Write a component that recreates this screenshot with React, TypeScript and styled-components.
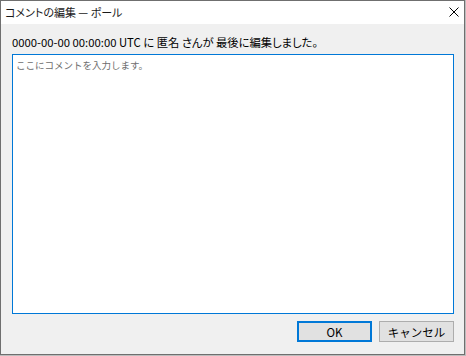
import React, { FC } from 'react';
import styled, { createGlobalStyle } from 'styled-components';

const GlobalStyle = createGlobalStyle`
  html, body {
    margin: 0;
    padding: 0;
    background: #bdbdbd;
  }
  * {
    box-sizing: border-box;
  }
`;

const App: FC = () => {
  return (
    <>
      <GlobalStyle />
      <Window>
        <TitleBar>
          <Title>コメントの編集 — ポール</Title>
          <CloseButton aria-label="閉じる">
            <svg width="10" height="10" viewBox="0 0 10 10">
              <path d="M0.5 0.5 L9.5 9.5 M9.5 0.5 L0.5 9.5" stroke="#000" strokeWidth="1" fill="none" />
            </svg>
          </CloseButton>
        </TitleBar>
        <Body>
          <Info>0000-00-00 00:00:00 UTC に 匿名 さんが 最後に編集しました。</Info>
          <CommentBox placeholder="ここにコメントを入力します。" />
          <Footer>
            <Button primary>OK</Button>
            <Button>キャンセル</Button>
          </Footer>
        </Body>
      </Window>
    </>
  );
};
export default App;

const Window = styled.div`
  display: flex;
  flex-direction: column;
  width: 465px;
  height: 355px;
  border: 1px solid #6f6f6f;
  background: #f0f0f0;
  font-family: 'Noto Sans CJK JP', 'Noto Sans', sans-serif;
  font-feature-settings: 'palt';
  color: #000;
`;

const TitleBar = styled.div`
  display: flex;
  align-items: center;
  justify-content: space-between;
  height: 24px;
  background: #fff;
  padding-left: 4px;
`;

const Title = styled.span`
  font-size: 11px;
  line-height: 24px;
  color: #1a1a1a;
  margin-top: -2px;
`;

const CloseButton = styled.div`
  display: flex;
  align-items: center;
  justify-content: center;
  width: 46px;
  height: 24px;
  margin-right: -13px;
  margin-top: -2px;
`;

const Body = styled.div`
  flex: 1;
  display: flex;
  flex-direction: column;
  padding: 5px 10px 12px 11px;
`;

const Info = styled.div`
  height: 25px;
  display: flex;
  align-items: center;
  font-size: 11.3px;
  white-space: nowrap;
`;

const CommentBox = styled.textarea`
  width: 442px;
  height: 260px;
  border: 1px solid #0078d7;
  background: #fff;
  padding: 3px 3px;
  margin: 0;
  resize: none;
  outline: none;
  font-family: inherit;
  font-size: 9.5px;
  &::placeholder {
    color: #6d6d6d;
  }
`;

const Footer = styled.div`
  display: flex;
  justify-content: flex-end;
  gap: 7px;
  margin-top: 7px;
`;

const Button = styled.button<{ primary?: boolean }>`
  width: 75px;
  height: 21px;
  padding: 0;
  margin: 0;
  background: #e1e1e1;
  border: ${p => (p.primary ? '2px solid #0078d7' : '1px solid #adadad')};
  font-family: inherit;
  font-size: 11.5px;
  color: #000;
  cursor: default;
`;
